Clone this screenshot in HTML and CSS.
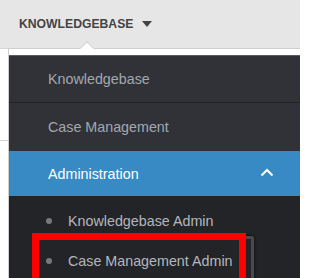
FILE: index.html
```html
<!DOCTYPE html>
<html>
<head>
<meta charset="utf-8">
<link rel="stylesheet" href="styles.css">
</head>
<body>
<header class="topbar">
  <div class="nav-title">KNOWLEDGEBASE <span class="tri"></span></div>
</header>
<main class="page">
  <div class="page-rule"></div>
</main>
<nav class="dropdown">
  <div class="drop-top"></div>
  <ul class="menu">
    <li class="item">Knowledgebase</li>
    <li class="item">Case Management</li>
    <li class="item active">Administration
      <svg class="chev" width="14" height="9" viewBox="0 0 14 9"><polyline points="1.5,7.5 7,2 12.5,7.5" fill="none" stroke="#fff" stroke-width="2"/></svg>
    </li>
    <li class="sub">
      <ul class="sublist">
        <li class="subitem"><span class="dot"></span>Knowledgebase Admin</li>
        <li class="subitem hl"><span class="dot"></span>Case Management Admin</li>
      </ul>
    </li>
  </ul>
</nav>
<div class="annot"></div>
</body>
</html>
```
FILE: styles.css
```css
html, body { margin: 0; padding: 0; overflow: hidden; }
body {
  background: #fff;
  font-family: "Liberation Sans", Arial, sans-serif;
  width: 300px;
  height: 278px;
  position: relative;
}
.topbar {
  height: 48px;
  background: #e6e6e6;
  border-bottom: 1px solid #d6d6d6;
  display: flex;
  align-items: center;
}
.nav-title {
  margin-left: 19px;
  margin-top: -1px;
  font-weight: bold;
  font-size: 12.2px;
  color: #444;
  display: flex;
  align-items: center;
  gap: 6px;
}
.tri {
  width: 0; height: 0;
  border-left: 5px solid transparent;
  border-right: 5px solid transparent;
  border-top: 6px solid #444;
  margin-left: 3px;
  margin-top: 1px;
}
.page { height: 229px; }
.page-rule {
  margin-top: 91px;
  border-top: 1px solid #d4d4d4;
}
.dropdown {
  position: absolute;
  left: 8px;
  top: 48px;
  right: 0;
  bottom: 0;
  border-left: 1px solid #cfcfcf;
}
.drop-top {
  height: 6px;
  background: #fff;
  border-top: 1px solid #cfcfcf;
  border-bottom: 1px solid #5a5b5f;
}
.dropdown::before {
  content: "";
  position: absolute;
  left: 73px;
  top: -5px;
  width: 9px;
  height: 9px;
  background: #fff;
  border-left: 1px solid #cfcfcf;
  border-top: 1px solid #cfcfcf;
  transform: rotate(45deg);
}
.menu, .sublist { list-style: none; margin: 0; padding: 0; }
.item {
  background: #313237;
  color: #a3a8b0;
  font-size: 14.3px;
  padding-left: 39px;
  display: flex;
  align-items: center;
  height: 46px;
}
.item:first-child { border-bottom: 1px solid #222327; }
.item:nth-child(2) { height: 48px; }
.item.active {
  background: #378ac4;
  color: #fff;
  height: 45px;
  justify-content: space-between;
  padding-right: 26px;
}
.chev { display: block; margin-top: -2px; }
.sub {
  background: #232428;
  padding-top: 10px;
  height: 73px;
  overflow: hidden;
}
.subitem {
  color: #b3b7bd;
  font-size: 14.3px;
  height: 30px;
  display: flex;
  align-items: center;
  padding-left: 37px;
  gap: 16px;
}
.dot {
  width: 6px; height: 6px;
  border-radius: 50%;
  background: #77787b;
}
.subitem.hl {
  margin-left: 27px;
  width: 205px;
  height: 40px;
  padding-left: 7px;
  padding-top: 3px;
  box-sizing: content-box;
  border: 3px solid #4a4a4d;
  border-bottom: 0;
  border-radius: 3px 3px 0 0;
  box-shadow: 0 0 3px #000;
  background: #232428;
  height: 37px;
}
.annot {
  position: absolute;
  left: 32px;
  top: 233px;
  width: 200px;
  height: 38px;
  border: 7px solid #ff0000;
  border-bottom: 0;
}
```
